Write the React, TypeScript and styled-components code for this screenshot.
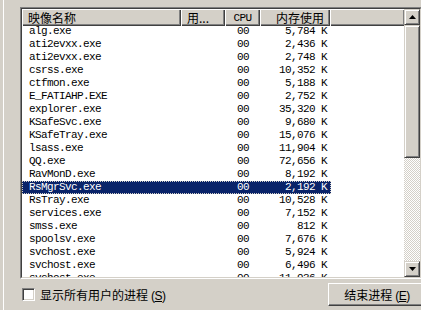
import React, { FC } from 'react'
import styled, { createGlobalStyle } from 'styled-components'

const GlobalStyle = createGlobalStyle`
  html, body {
    margin: 0;
    padding: 0;
    width: 421px;
    height: 310px;
    overflow: hidden;
    background: #d4d0c8;
  }
`

const CJK = `"Noto Sans CJK SC", "Noto Sans", sans-serif`
const MONO = `"Liberation Mono", "Noto Sans CJK SC", monospace`

const Page = styled.div`
  width: 421px;
  height: 310px;
  box-sizing: border-box;
  margin-left: 3px;
  padding: 7px 0 0 16px;
  border-left: 1px solid #ffffff;
  display: flex;
  flex-direction: column;
`

const ListBox = styled.div`
  width: 402px;
  height: 272px;
  box-sizing: border-box;
  border-style: solid;
  border-width: 1px;
  border-color: #808080 #ffffff #ffffff #808080;
  display: flex;
`

const ListInner = styled.div`
  flex: 1;
  display: flex;
  border-style: solid;
  border-width: 1px;
  border-color: #404040 #d4d0c8 #d4d0c8 #404040;
  background: #ffffff;
  overflow: hidden;
`

const Table = styled.div`
  width: 382px;
  display: flex;
  flex-direction: column;
  overflow: hidden;
`

const HeaderRow = styled.div`
  display: flex;
  height: 16px;
  flex: none;
`

const HeaderCell = styled.div<{ $w: number; $align?: string }>`
  width: ${(p) => p.$w}px;
  flex: none;
  box-sizing: border-box;
  height: 16px;
  background: #d4d0c8;
  border-top: 1px solid #ffffff;
  border-left: 1px solid #ffffff;
  box-shadow: inset -1px -1px 0 #808080, 1px 1px 0 #404040;
  margin-right: 1px;
  display: flex;
  align-items: center;
  justify-content: ${(p) => p.$align || 'flex-start'};
  padding: 0 5px;
  font-family: ${CJK};
  font-size: 12px;
  line-height: 14px;
  color: #000;
  white-space: nowrap;
  overflow: hidden;
`

const HeaderFiller = styled(HeaderCell)`
  flex: 1;
  margin-right: 0;
`

const MonoHead = styled.span`
  font-family: ${MONO};
  font-size: 11px;
  letter-spacing: -0.6px;
`

const Row = styled.div<{ $selected?: boolean }>`
  display: flex;
  height: 13px;
  flex: none;
  width: 309px;
  box-sizing: border-box;
  background: ${(p) => (p.$selected ? '#0a246a' : 'transparent')};
  color: ${(p) => (p.$selected ? '#ffffff' : '#000000')};
  outline: ${(p) => (p.$selected ? '1px dotted #d4d0c8' : 'none')};
  outline-offset: -1px;
  font-family: ${MONO};
  font-size: 11px;
  letter-spacing: -0.6px;
  line-height: 13px;
  white-space: nowrap;
`

const Cell = styled.div<{ $w: number; $align?: string; $pl?: number; $pr?: number }>`
  width: ${(p) => p.$w}px;
  flex: none;
  box-sizing: border-box;
  text-align: ${(p) => p.$align || 'left'};
  padding-left: ${(p) => p.$pl ?? 0}px;
  padding-right: ${(p) => p.$pr ?? 0}px;
  overflow: hidden;
`

const ScrollBar = styled.div`
  width: 16px;
  flex: none;
  display: flex;
  flex-direction: column;
  background-color: #ffffff;
  background-image: conic-gradient(#d4d0c8 25%, #ffffff 0 50%, #d4d0c8 0 75%, #ffffff 0);
  background-size: 2px 2px;
`

const Raised = styled.div<{ $h?: number }>`
  box-sizing: border-box;
  width: 16px;
  height: ${(p) => (p.$h ? `${p.$h}px` : '16px')};
  flex: none;
  background: #d4d0c8;
  border-style: solid;
  border-width: 1px;
  border-color: #d4d0c8 #404040 #404040 #d4d0c8;
  box-shadow: inset 1px 1px 0 #ffffff, inset -1px -1px 0 #808080;
  display: flex;
  align-items: center;
  justify-content: center;
`

const Track = styled.div`
  flex: 1;
`

const Bottom = styled.div`
  display: flex;
  align-items: center;
  justify-content: space-between;
  margin-top: 3px;
  height: 24px;
  padding-left: 2px;
`

const CheckLabel = styled.label`
  display: flex;
  align-items: center;
  gap: 5px;
  font-family: ${CJK};
  font-size: 12px;
  color: #000;
`

const CheckBox = styled.span`
  width: 13px;
  height: 13px;
  box-sizing: border-box;
  background: #ffffff;
  border-style: solid;
  border-width: 1px;
  border-color: #808080 #ffffff #ffffff #808080;
  box-shadow: inset 1px 1px 0 #404040, inset -1px -1px 0 #d4d0c8;
`

const Button = styled.button`
  width: 98px;
  height: 23px;
  box-sizing: border-box;
  margin: 0 -2px 0 0;
  padding: 0;
  background: #d4d0c8;
  border-style: solid;
  border-width: 1px;
  border-color: #ffffff #404040 #404040 #ffffff;
  box-shadow: inset -1px -1px 0 #808080;
  font-family: ${CJK};
  font-size: 12px;
  color: #000;
`

const Mnemonic = styled.span`
  font-family: "Liberation Sans", sans-serif;
  font-size: 12px;
  margin-left: 3px;
  letter-spacing: -0.5px;

  u {
    text-decoration: underline;
  }
`

type Proc = { name: string; mem: string; selected?: boolean }

const procs: Proc[] = [
  { name: 'alg.exe', mem: '5,784 K' },
  { name: 'ati2evxx.exe', mem: '2,436 K' },
  { name: 'ati2evxx.exe', mem: '2,748 K' },
  { name: 'csrss.exe', mem: '10,352 K' },
  { name: 'ctfmon.exe', mem: '5,188 K' },
  { name: 'E_FATIAHP.EXE', mem: '2,752 K' },
  { name: 'explorer.exe', mem: '35,320 K' },
  { name: 'KSafeSvc.exe', mem: '9,680 K' },
  { name: 'KSafeTray.exe', mem: '15,076 K' },
  { name: 'lsass.exe', mem: '11,904 K' },
  { name: 'QQ.exe', mem: '72,656 K' },
  { name: 'RavMonD.exe', mem: '8,192 K' },
  { name: 'RsMgrSvc.exe', mem: '2,192 K', selected: true },
  { name: 'RsTray.exe', mem: '10,528 K' },
  { name: 'services.exe', mem: '7,152 K' },
  { name: 'smss.exe', mem: '812 K' },
  { name: 'spoolsv.exe', mem: '7,676 K' },
  { name: 'svchost.exe', mem: '5,924 K' },
  { name: 'svchost.exe', mem: '6,496 K' },
  { name: 'svchost.exe', mem: '11,936 K' }
]

const Arrow: FC<{ down?: boolean }> = ({ down }) => (
  <svg width='7' height='4' viewBox='0 0 7 4'>
    <path d={down ? 'M0 0h7L3.5 4z' : 'M3.5 0L7 4H0z'} fill='#000' />
  </svg>
)

const App: FC = () => (
  <>
    <GlobalStyle />
    <Page>
      <ListBox>
        <ListInner>
          <Table>
            <HeaderRow>
              <HeaderCell $w={158}>映像名称</HeaderCell>
              <HeaderCell $w={43}>用...</HeaderCell>
              <HeaderCell $w={34} $align='center'>
                <MonoHead>CPU</MonoHead>
              </HeaderCell>
              <HeaderCell $w={69} $align='flex-end'>
                内存使用
              </HeaderCell>
              <HeaderFiller $w={0} />
            </HeaderRow>
            {procs.map((p, i) => (
              <Row key={i} $selected={p.selected}>
                <Cell $w={203} $pl={7}>
                  {p.name}
                </Cell>
                <Cell $w={35} $pl={12}>
                  00
                </Cell>
                <Cell $w={71} $align='right' $pr={4}>
                  {p.mem}
                </Cell>
              </Row>
            ))}
          </Table>
          <ScrollBar>
            <Raised>
              <Arrow />
            </Raised>
            <Raised $h={133} />
            <Track />
            <Raised>
              <Arrow down />
            </Raised>
          </ScrollBar>
        </ListInner>
      </ListBox>
      <Bottom>
        <CheckLabel>
          <CheckBox />
          <span>
            显示所有用户的进程
            <Mnemonic>
              (<u>S</u>)
            </Mnemonic>
          </span>
        </CheckLabel>
        <Button>
          结束进程
          <Mnemonic>
            (<u>E</u>)
          </Mnemonic>
        </Button>
      </Bottom>
    </Page>
  </>
)

export default App
